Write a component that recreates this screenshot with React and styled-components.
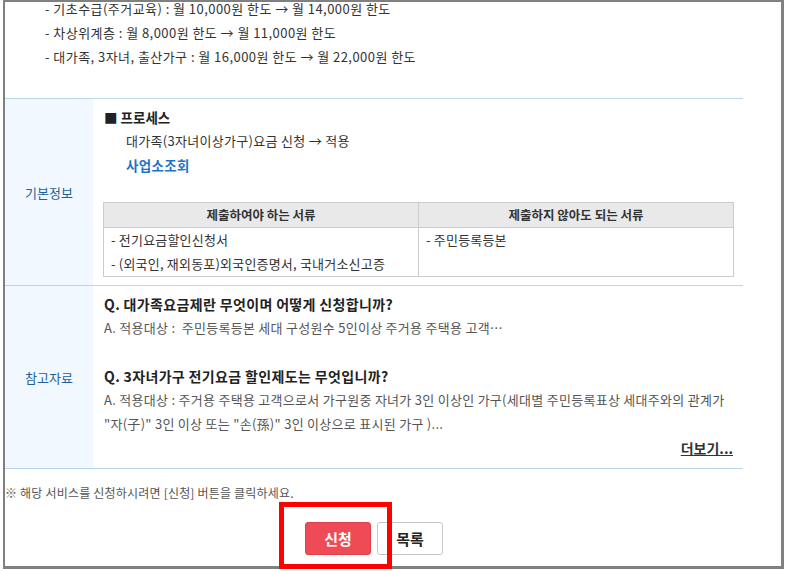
import React from "react";
import styled, { createGlobalStyle } from "styled-components";

const GlobalStyle = createGlobalStyle`
  html, body { margin: 0; padding: 0; background: #fff; }
  body {
    font-family: "Noto Sans CJK KR", "Noto Sans", "Liberation Sans", sans-serif;
    color: #333;
  }
`;

const Frame = styled.div`
  position: relative;
  box-sizing: border-box;
  margin-left: 3px;
  width: 781px;
  height: 569px;
  border-style: solid;
  border-color: #808080;
  border-width: 2px 3px 3px 2px;
`;

const Content = styled.div`
  width: 738px;
  display: flex;
  flex-direction: column;
`;

const TopList = styled.ul`
  list-style: none;
  margin: -5px 0 0;
  padding: 0 0 29px 40px;
  font-size: 13px;
  letter-spacing: 0.45px;
  line-height: 24px;
  color: #333;
  white-space: nowrap;
`;

const InfoTable = styled.div`
  border-top: 1px solid #b9d5ea;
`;

const Row = styled.div`
  display: grid;
  grid-template-columns: 88px 1fr;
  border-bottom: 1px solid #b9d5ea;
`;

const Label = styled.div`
  background: #f1f8ff;
  color: #22609c;
  font-size: 13px;
  display: flex;
  align-items: center;
  justify-content: center;
`;

const Body = styled.div`
  padding: 6px 10px 8px 11px;
  font-size: 13px;
  line-height: 24px;
`;

const Heading = styled.div`
  font-size: 13.5px;
  font-weight: 700;
  color: #222;
  white-space: nowrap;
`;

const Indent = styled.div`
  padding-left: 22px;
  color: ${(p) => p.$color || "#333"};
  font-weight: ${(p) => (p.$bold ? 700 : 400)};
  font-size: ${(p) => (p.$bold ? "13.5px" : "13px")};
  letter-spacing: 0.3px;
`;

const DocTable = styled.table`
  margin: 25px 0 0 -1px;
  width: 631px;
  border-collapse: collapse;
  table-layout: fixed;
  font-size: 13px;
`;

const Th = styled.th`
  background: #e9e9e9;
  border: 1px solid #cccccc;
  height: 24px;
  padding: 0;
  font-size: 12.5px;
  font-weight: 700;
  color: #333;
  line-height: 24px;
  text-align: center;
`;

const Td = styled.td`
  border: 1px solid #cccccc;
  vertical-align: top;
  padding: 0 7px;
  line-height: 24px;
  color: #333;
  letter-spacing: 0.2px;
  white-space: nowrap;
`;

const Question = styled.div`
  font-size: 14px;
  font-weight: 700;
  letter-spacing: 0.35px;
  color: #222;
  white-space: nowrap;
`;

const Answer = styled.div`
  font-size: 13px;
  letter-spacing: 0.28px;
  color: #555;
  white-space: nowrap;
`;

const Spacer = styled.div`
  height: 24px;
`;

const More = styled.div`
  text-align: right;
  font-size: 14px;
  font-weight: 700;
  color: #333;
  text-decoration: underline;
`;

const Notice = styled.p`
  margin: 15px 0 0;
  font-size: 12px;
  letter-spacing: 0.2px;
  line-height: 18px;
  color: #555;
  white-space: nowrap;
`;

const ButtonRow = styled.div`
  display: flex;
  justify-content: center;
  gap: 6px;
  margin-top: 20px;
`;

const Button = styled.button`
  box-sizing: border-box;
  width: 66px;
  height: 33px;
  border-radius: 3px;
  font-family: inherit;
  font-size: 15px;
  font-weight: 700;
  cursor: pointer;
  border: 1px solid ${(p) => (p.$primary ? "#e0414c" : "#c8c8c8")};
  background: ${(p) => (p.$primary ? "#ef4b56" : "#ffffff")};
  color: ${(p) => (p.$primary ? "#ffffff" : "#222")};
`;

const Highlight = styled.div`
  position: absolute;
  left: 274px;
  top: 500px;
  width: 113px;
  height: 67px;
  box-sizing: border-box;
  border: 5px solid #ff0000;
  pointer-events: none;
`;

export default function App() {
  return (
    <>
      <GlobalStyle />
      <Frame>
        <Content>
          <TopList>
            <li>- 기초수급(주거교육) : 월 10,000원 한도 → 월 14,000원 한도</li>
            <li>- 차상위계층 : 월 8,000원 한도 → 월 11,000원 한도</li>
            <li>- 대가족, 3자녀, 출산가구 : 월 16,000원 한도 → 월 22,000원 한도</li>
          </TopList>
          <InfoTable>
            <Row>
              <Label>기본정보</Label>
              <Body>
                <Heading>■ 프로세스</Heading>
                <Indent>대가족(3자녀이상가구)요금 신청 → 적용</Indent>
                <Indent $bold $color="#1e73c8">사업소조회</Indent>
                <DocTable>
                  <thead>
                    <tr>
                      <Th>제출하여야 하는 서류</Th>
                      <Th>제출하지 않아도 되는 서류</Th>
                    </tr>
                  </thead>
                  <tbody>
                    <tr>
                      <Td>
                        - 전기요금할인신청서
                        <br />
                        - (외국인, 재외동포)외국인증명서, 국내거소신고증
                      </Td>
                      <Td>- 주민등록등본</Td>
                    </tr>
                  </tbody>
                </DocTable>
              </Body>
            </Row>
            <Row>
              <Label>참고자료</Label>
              <Body>
                <Question>Q. 대가족요금제란 무엇이며 어떻게 신청합니까?</Question>
                <Answer>A. 적용대상 :&nbsp; 주민등록등본 세대 구성원수 5인이상 주거용 주택용 고객…</Answer>
                <Spacer />
                <Question>Q. 3자녀가구 전기요금 할인제도는 무엇입니까?</Question>
                <Answer>A. 적용대상 : 주거용 주택용 고객으로서 가구원중 자녀가 3인 이상인 가구(세대별 주민등록표상 세대주와의 관계가</Answer>
                <Answer>"자(子)" 3인 이상 또는 "손(孫)" 3인 이상으로 표시된 가구 )...</Answer>
                <More>더보기...</More>
              </Body>
            </Row>
          </InfoTable>
          <Notice>※ 해당 서비스를 신청하시려면 [신청] 버튼을 클릭하세요.</Notice>
          <ButtonRow>
            <Button $primary>신청</Button>
            <Button>목록</Button>
          </ButtonRow>
        </Content>
        <Highlight />
      </Frame>
    </>
  );
}
